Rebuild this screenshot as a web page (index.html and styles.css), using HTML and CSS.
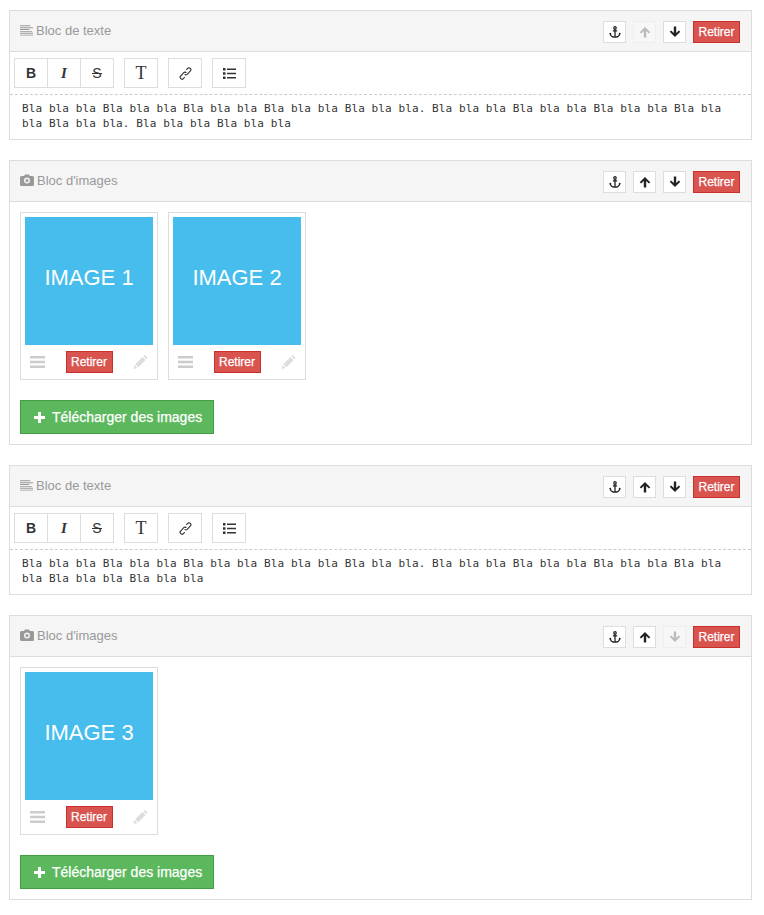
FILE: index.html
```html
<!DOCTYPE html>
<html lang="en">

<head>
    <meta charset="UTF-8">
    <title>Blocs</title>
    <link rel="stylesheet" href="styles.css">
</head>

<body>
    <svg class="sprites" width="0" height="0">
        <symbol id="i-lines" viewBox="0 0 14 12"><path d="M0 1h11v1H0zM0 3h14v1H0zM0 5h10v1H0zM0 7h13v1H0zM0 9h14v1H0zM0 11h14v1H0z" /></symbol>
        <symbol id="i-camera" viewBox="0 0 14 12"><path fill-rule="evenodd" d="M5 .5h4L10 2h2.500A1.500 1.500 0 0 1 14 3.500v7a1.500 1.500 0 0 1-1.500 1.500h-11A1.500 1.500 0 0 1 0 10.500v-7A1.500 1.500 0 0 1 1.500 2H4zM7 3.500a3 3 0 1 0 0 6 3 3 0 0 0 0-6zM7 5a1.500 1.500 0 1 1 0 3 1.500 1.500 0 0 1 0-3z" /></symbol>
        <symbol id="i-anchor" viewBox="0 0 14 14"><g fill="none" stroke="currentColor" stroke-width="1.500"><circle cx="7" cy="2.200" r="1.400" /><path d="M7 3.600V13M4.500 5.800h5M1.500 8.500c0 2.800 2.500 4.600 5.500 4.600s5.500-1.800 5.500-4.600" /></g><path d="M0 9.500l1.500-2 1.500 2zM11 9.500l1.500-2 1.500 2z" /></symbol>
        <symbol id="i-up" viewBox="-.5 -.5 13 13"><path d="M6 .5l5.700 5.700-1.500 1.500-2.900-2.900V12H4.700V4.800L1.800 7.700.3 6.200z" /></symbol>
        <symbol id="i-down" viewBox="-.5 -.5 13 13"><path d="M6 11.500L.3 5.800l1.500-1.500 2.900 2.900V0h2.600v7.200l2.900-2.900 1.500 1.500z" /></symbol>
        <symbol id="i-link" viewBox="0 0 14 14"><path fill="none" stroke="currentColor" stroke-width="1.200" d="M6 7.800a2 2 0 0 0 2.900.2l3.300-3.700a2 2 0 0 0-2.900-2.800L7.800 3M8 6.200a2 2 0 0 0-2.900-.2L1.800 9.700a2 2 0 0 0 2.900 2.800L6.200 11" /></symbol>
        <symbol id="i-list" viewBox="0 0 13 12"><path d="M0 .5h2.500V3H0zM0 4.800h2.500v2.500H0zM0 9h2.500v2.500H0zM4 1h9v1.500H4zM4 5.300h9v1.500H4zM4 9.500h9V11H4z" /></symbol>
        <symbol id="i-menu" viewBox="0 0 15 12"><path d="M0 0h15v2.500H0zM0 4.700h15v2.500H0zM0 9.500h15V12H0z" /></symbol>
        <symbol id="i-pencil" viewBox="0 0 14 14"><path d="M0 14l.9-4 3.100 3.100zM1.700 9.200L9 1.900l3.100 3.100-7.300 7.300zM9.800 1.100l.5-.5a1.200 1.200 0 0 1 1.700 0l1.400 1.400a1.200 1.200 0 0 1 0 1.700l-.5.5z" /></symbol>
        <symbol id="i-plus" viewBox="0 0 11 11"><path d="M4 0h3v4h4v3H7v4H4V7H0V4h4z" /></symbol>
    </svg>

    <section class="block">
        <header class="block-head">
            <h3 class="block-title"><svg class="title-icon"><use href="#i-lines" /></svg>Bloc de texte</h3>
            <div class="block-actions">
                <button class="mini"><svg><use href="#i-anchor" /></svg></button>
                <button class="mini off"><svg><use href="#i-up" /></svg></button>
                <button class="mini"><svg><use href="#i-down" /></svg></button>
                <button class="danger">Retirer</button>
            </div>
        </header>
        <div class="toolbar">
            <div class="tool-group">
                <button class="tool tool-b">B</button>
                <button class="tool tool-i">I</button>
                <button class="tool tool-s">S</button>
            </div>
            <div class="tool-group"><button class="tool tool-t">T</button></div>
            <div class="tool-group"><button class="tool"><svg class="tool-icon"><use href="#i-link" /></svg></button></div>
            <div class="tool-group"><button class="tool"><svg class="tool-icon"><use href="#i-list" /></svg></button></div>
        </div>
        <div class="editor">Bla bla bla Bla bla bla Bla bla bla Bla bla bla Bla bla bla. Bla bla bla Bla bla bla Bla bla bla Bla bla<br>bla Bla bla bla. Bla bla bla Bla bla bla</div>
    </section>

    <section class="block">
        <header class="block-head">
            <h3 class="block-title"><svg class="title-icon camera"><use href="#i-camera" /></svg>Bloc d'images</h3>
            <div class="block-actions">
                <button class="mini"><svg><use href="#i-anchor" /></svg></button>
                <button class="mini"><svg><use href="#i-up" /></svg></button>
                <button class="mini"><svg><use href="#i-down" /></svg></button>
                <button class="danger">Retirer</button>
            </div>
        </header>
        <div class="gallery">
            <div class="cards">
                <div class="card">
                    <div class="thumb">IMAGE 1</div>
                    <div class="card-foot">
                        <svg class="foot-icon"><use href="#i-menu" /></svg>
                        <button class="danger">Retirer</button>
                        <svg class="foot-icon pencil"><use href="#i-pencil" /></svg>
                    </div>
                </div>
                <div class="card">
                    <div class="thumb">IMAGE 2</div>
                    <div class="card-foot">
                        <svg class="foot-icon"><use href="#i-menu" /></svg>
                        <button class="danger">Retirer</button>
                        <svg class="foot-icon pencil"><use href="#i-pencil" /></svg>
                    </div>
                </div>
            </div>
            <button class="upload"><svg><use href="#i-plus" /></svg>Télécharger des images</button>
        </div>
    </section>

    <section class="block">
        <header class="block-head">
            <h3 class="block-title"><svg class="title-icon"><use href="#i-lines" /></svg>Bloc de texte</h3>
            <div class="block-actions">
                <button class="mini"><svg><use href="#i-anchor" /></svg></button>
                <button class="mini"><svg><use href="#i-up" /></svg></button>
                <button class="mini"><svg><use href="#i-down" /></svg></button>
                <button class="danger">Retirer</button>
            </div>
        </header>
        <div class="toolbar">
            <div class="tool-group">
                <button class="tool tool-b">B</button>
                <button class="tool tool-i">I</button>
                <button class="tool tool-s">S</button>
            </div>
            <div class="tool-group"><button class="tool tool-t">T</button></div>
            <div class="tool-group"><button class="tool"><svg class="tool-icon"><use href="#i-link" /></svg></button></div>
            <div class="tool-group"><button class="tool"><svg class="tool-icon"><use href="#i-list" /></svg></button></div>
        </div>
        <div class="editor">Bla bla bla Bla bla bla Bla bla bla Bla bla bla Bla bla bla. Bla bla bla Bla bla bla Bla bla bla Bla bla<br>bla Bla bla bla Bla bla bla</div>
    </section>

    <section class="block">
        <header class="block-head">
            <h3 class="block-title"><svg class="title-icon camera"><use href="#i-camera" /></svg>Bloc d'images</h3>
            <div class="block-actions">
                <button class="mini"><svg><use href="#i-anchor" /></svg></button>
                <button class="mini"><svg><use href="#i-up" /></svg></button>
                <button class="mini off"><svg><use href="#i-down" /></svg></button>
                <button class="danger">Retirer</button>
            </div>
        </header>
        <div class="gallery">
            <div class="cards">
                <div class="card">
                    <div class="thumb">IMAGE 3</div>
                    <div class="card-foot">
                        <svg class="foot-icon"><use href="#i-menu" /></svg>
                        <button class="danger">Retirer</button>
                        <svg class="foot-icon pencil"><use href="#i-pencil" /></svg>
                    </div>
                </div>
            </div>
            <button class="upload"><svg><use href="#i-plus" /></svg>Télécharger des images</button>
        </div>
    </section>
</body>

</html>
```

FILE: styles.css
```css
body {
    margin: 0;
    padding: 10px 12px 0 9px;
    font-family: "Liberation Sans", Arial, sans-serif;
    background: #fff;
    color: #333;
}

button {
    font-family: inherit;
    padding: 0;
    background: #fff;
    cursor: pointer;
}

.sprites {
    display: none;
}

.block {
    border: 1px solid #ddd;
    margin-bottom: 20px;
}

.block-head {
    display: flex;
    justify-content: space-between;
    align-items: center;
    height: 40px;
    padding: 0 11px 0 10px;
    background: #f5f5f5;
    border-bottom: 1px solid #ddd;
}

.block-title {
    display: flex;
    align-items: center;
    margin: 0 0 2px;
    font-size: 13px;
    font-weight: normal;
    color: #999;
}

.title-icon {
    width: 13px;
    height: 12px;
    margin-right: 3px;
    fill: #999;
}

.title-icon.camera {
    width: 14px;
}

.block-actions {
    display: flex;
    align-items: center;
    margin-top: 2px;
}

.mini {
    display: flex;
    align-items: center;
    justify-content: center;
    width: 23px;
    height: 22px;
    margin-right: 7px;
    border: 1px solid #ddd;
    color: #222;
}

.mini svg {
    width: 12px;
    height: 12px;
    fill: currentColor;
}

.mini.off {
    background: #f7f7f7;
    border-color: #eee;
    color: #bbb;
}

.danger {
    width: 47px;
    height: 22px;
    background: #d9534f;
    border: 1px solid #c9302c;
    color: #fff;
    font-size: 12px;
    -webkit-text-stroke: .25px #fff;
}

.toolbar {
    display: flex;
    gap: 10px;
    padding: 6px 4px;
    border-bottom: 1px dashed #ccc;
}

.tool-group {
    display: flex;
}

.tool {
    display: flex;
    align-items: center;
    justify-content: center;
    width: 34px;
    height: 30px;
    border: 1px solid #ddd;
    color: #333;
    font-size: 14px;
}

.tool + .tool {
    margin-left: -1px;
}

.tool-b {
    font-weight: bold;
}

.tool-i {
    font-family: "Liberation Serif", serif;
    font-style: italic;
    font-weight: bold;
    font-size: 15px;
}

.tool-s {
    position: relative;
}

/* the stroke is wider than the letter */
.tool-s::after {
    content: "";
    position: absolute;
    left: 11px;
    right: 11px;
    top: 14px;
    height: 1px;
    background: #333;
}

.tool-t {
    font-family: "Liberation Serif", serif;
    font-size: 18px;
}

.tool-icon {
    width: 13px;
    height: 13px;
    fill: currentColor;
}

.editor {
    padding: 6px 12px 8px;
    font-family: "DejaVu Sans Mono", monospace;
    font-size: 11px;
    letter-spacing: .1px;
    line-height: 15px;
    color: #333;
}

.gallery {
    padding: 10px;
}

.cards {
    display: flex;
    gap: 10px;
    margin-bottom: 20px;
}

.card {
    width: 128px;
    padding: 4px;
    border: 1px solid #ddd;
}

.thumb {
    display: flex;
    align-items: center;
    justify-content: center;
    height: 122px;
    padding-bottom: 6px;
    background: #46bdec;
    color: #fff;
    font-size: 22px;
}

.card-foot {
    display: flex;
    align-items: center;
    justify-content: space-between;
    padding: 6px 5px 2px;
}

.foot-icon {
    width: 15px;
    height: 14px;
    fill: #ccc;
}

.foot-icon.pencil {
    fill: #ddd;
}

.upload {
    display: flex;
    align-items: center;
    width: 194px;
    height: 34px;
    padding-left: 13px;
    background: #5cb85c;
    border: 1px solid #449d44;
    color: #fff;
    font-size: 14px;
    -webkit-text-stroke: .25px #fff;
}

.upload svg {
    width: 11px;
    height: 11px;
    margin-right: 7px;
    fill: #fff;
}
```
